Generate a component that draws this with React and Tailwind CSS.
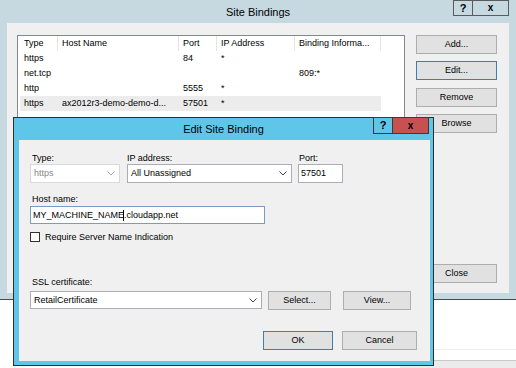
import React from "react";

/* ---------------------------
   Small building blocks
--------------------------- */
function Chevron({ disabled }) {
  return (
    <svg width="8" height="5" viewBox="0 0 8 5" className="shrink-0">
      <path
        d="M0.5 0.5 L4 4 L7.5 0.5"
        fill="none"
        stroke={disabled ? "#a8a8a8" : "#444"}
        strokeWidth="1"
      />
    </svg>
  );
}

function Btn({ children, w, primary, className = "" }) {
  return (
    <div
      className={`h-[19px] flex items-center justify-center bg-[#e1e1e1] border ${
        primary ? "border-[#3c7fb1]" : "border-[#adadad]"
      } ${className}`}
      style={{ width: w }}
    >
      {children}
    </div>
  );
}

const cols = [
  { label: "Type", w: 38 },
  { label: "Host Name", w: 121 },
  { label: "Port", w: 38 },
  { label: "IP Address", w: 78 },
  { label: "Binding Informa...", w: 86 },
];

const rows = [
  ["https", "", "84", "*", ""],
  ["net.tcp", "", "", "", "809:*"],
  ["http", "", "5555", "*", ""],
  ["https", "ax2012r3-demo-demo-d...", "57501", "*", ""],
];

export default function App() {
  return (
    <div
      className="relative w-[516px] h-[368px] bg-white overflow-hidden text-[9px] text-black leading-none"
      style={{ fontFamily: '"Liberation Sans", Arial, sans-serif' }}
    >
      {/* background window edge, bottom right */}
      <div className="absolute left-[400px] top-[349px] w-[116px] h-px bg-[#efefef]" />
      <div className="absolute left-[400px] top-[360px] w-[116px] h-[8px] bg-[#ebebeb] border-t border-[#c8c8c8]" />

      {/* Site Bindings window */}
      <div className="absolute left-0 top-0 w-[516px] h-[300px] bg-[#c6d8e0] border-b border-[#4a4a4a] flex flex-col">
        <div className="relative h-[23px] flex items-center justify-center text-[11px] pt-px">
          Site Bindings
          <div className="absolute right-[7px] top-0 flex">
            <div className="w-[20px] h-[16px] border border-[#5a5a5a] flex items-center justify-center font-bold text-[11px]">
              ?
            </div>
            <div className="w-[36px] h-[16px] border border-l-0 border-[#5a5a5a] flex items-center justify-center font-bold text-[10px]">
              x
            </div>
          </div>
        </div>

        <div className="mx-[7px] mb-[6px] flex-1 bg-[#f0f0f0] flex pt-[12px] pl-[10px] pr-[12px] pb-[10px]">
          {/* list view */}
          <div className="w-[388px] bg-white border border-[#828790] pl-[2px]">
            <div className="flex h-[15px]">
              {cols.map((c) => (
                <div
                  key={c.label}
                  className="h-full flex items-center pl-[4px] border-r border-[#e5e5e5]"
                  style={{ width: c.w }}
                >
                  {c.label}
                </div>
              ))}
            </div>
            {rows.map((r, i) => (
              <div
                key={i}
                className={`flex h-[15px] w-[361px] ${i === 3 ? "bg-[#ececec]" : ""}`}
              >
                {r.map((cell, j) => (
                  <div
                    key={j}
                    className="h-full flex items-center pl-[4px] whitespace-nowrap"
                    style={{ width: cols[j].w }}
                  >
                    {cell}
                  </div>
                ))}
              </div>
            ))}
          </div>

          {/* right buttons */}
          <div className="ml-[11px] flex flex-col">
            <Btn w={81}>Add...</Btn>
            <Btn w={81} primary className="mt-[7px]">
              Edit...
            </Btn>
            <Btn w={81} className="mt-[8px]">
              Remove
            </Btn>
            <Btn w={81} className="mt-[7px]">
              Browse
            </Btn>
            <Btn w={81} className="mt-auto">
              Close
            </Btn>
          </div>
        </div>
      </div>

      {/* Edit Site Binding dialog */}
      <div className="absolute left-[13px] top-[117px] w-[421px] h-[249px] border border-[#2e2e2e] bg-[#5fc6ea] flex flex-col">
        <div className="relative h-[22px] flex items-center justify-center text-[11px]">
          Edit Site Binding
          <div className="absolute right-[4px] top-[-1px] flex">
            <div className="w-[20px] h-[17px] border border-[#3a3a3a] flex items-center justify-center font-bold text-[11px]">
              ?
            </div>
            <div className="w-[36px] h-[17px] bg-[#c75050] border border-l-0 border-[#3a3a3a] flex items-center justify-center font-bold text-[10px]">
              x
            </div>
          </div>
        </div>

        <div className="ml-[5px] mr-[3px] mb-[4px] flex-1 bg-[#f0f0f0] flex flex-col pt-[12px] pl-[11px]">
          {/* Type / IP / Port */}
          <div className="flex">
            <div className="w-[90px]">
              <div className="h-[12px] flex items-center pl-[2px]">Type:</div>
              <div className="h-[19px] bg-white border border-[#d9d9d9] flex items-center justify-between pl-[3px] pr-[4px] text-[#8a8a8a]">
                https
                <Chevron disabled />
              </div>
            </div>
            <div className="w-[165px] ml-[7px]">
              <div className="h-[12px] flex items-center">IP address:</div>
              <div className="h-[19px] bg-white border border-[#abadb3] flex items-center justify-between pl-[3px] pr-[4px]">
                All Unassigned
                <Chevron />
              </div>
            </div>
            <div className="w-[45px] ml-[6px]">
              <div className="h-[12px] flex items-center pl-px">Port:</div>
              <div className="h-[19px] bg-white border border-[#abadb3] flex items-center pl-[2px]">
                57501
              </div>
            </div>
          </div>

          {/* Host name */}
          <div className="mt-[10px] h-[12px] flex items-center pl-[2px]">Host name:</div>
          <div className="mt-px w-[235px] h-[18px] bg-white border border-[#7a9cc0] flex items-center pl-[2px] whitespace-nowrap">
            MY_MACHINE_NAME
            <span className="inline-block w-px h-[11px] bg-black ml-[-1px]" />
            .cloudapp.net
          </div>

          {/* SNI checkbox */}
          <div className="mt-[7px] h-[12px] flex items-center">
            <div className="w-[10px] h-[10px] bg-white border border-[#333]" />
            <span className="ml-[5px]">Require Server Name Indication</span>
          </div>

          {/* SSL certificate */}
          <div className="mt-[33px] h-[12px] flex items-center pl-[2px]">SSL certificate:</div>
          <div className="mt-[3px] flex items-start">
            <div className="w-[232px] h-[18px] bg-white border border-[#abadb3] flex items-center justify-between pl-[3px] pr-[4px]">
              RetailCertificate
              <Chevron />
            </div>
            <Btn w={63} className="ml-[6px]">
              Select...
            </Btn>
            <Btn w={68} className="ml-[12px]">
              View...
            </Btn>
          </div>

          {/* OK / Cancel */}
          <div className="mt-[21px] flex justify-end pr-[13px]">
            <Btn w={70} primary>
              OK
            </Btn>
            <Btn w={75} className="ml-[9px]">
              Cancel
            </Btn>
          </div>
        </div>
      </div>
    </div>
  );
}
